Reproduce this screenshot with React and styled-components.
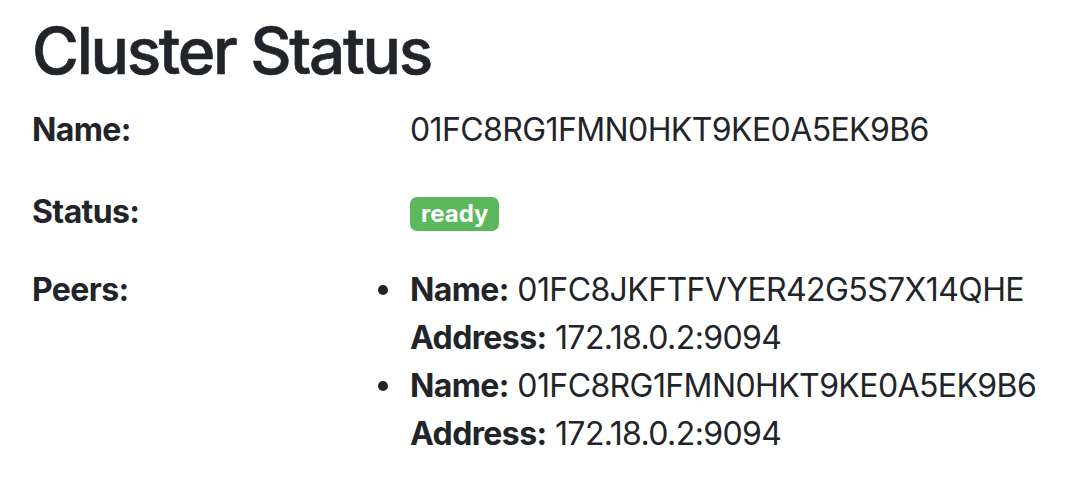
import styled, { createGlobalStyle } from "styled-components";

const GlobalStyle = createGlobalStyle`
  body {
    margin: 0;
    background: #ffffff;
    color: #212529;
    font-family: Inter, "Noto Sans", "Liberation Sans", sans-serif;
    overflow: hidden;
  }
`;

const Page = styled.div`
  padding: 13px 32px 0;
`;

const Title = styled.h2`
  margin: 0 0 16px;
  font-size: 64px;
  font-weight: 500;
  line-height: 1.2;
  letter-spacing: -2.3px;
  -webkit-text-stroke: 0.6px #212529;
`;

const Details = styled.dl`
  margin: 0;
  font-size: 32px;
  line-height: 48px;
  letter-spacing: -0.6px;
`;

const Row = styled.div`
  display: grid;
  grid-template-columns: 378px 1fr;
  margin-bottom: ${(props) => props.$gap || 32}px;
`;

const Label = styled.dt`
  font-weight: 700;
`;

const Value = styled.dd`
  margin: 0;
  white-space: nowrap;
`;

const Badge = styled.span`
  display: inline-block;
  vertical-align: 1px;
  padding: 5px 11px;
  border-radius: 7px;
  background: #5cb85c;
  color: #ffffff;
  font-size: 24px;
  font-weight: 700;
  line-height: 1;
  letter-spacing: 0;
`;

const PeerList = styled.ul`
  margin: 0;
  padding: 0;
  list-style: none;
`;

const Peer = styled.li`
  position: relative;

  &::before {
    content: "";
    position: absolute;
    left: -32px;
    top: 19px;
    width: 10px;
    height: 10px;
    border-radius: 50%;
    background: #212529;
  }
`;

const Line = styled.div``;

const Key = styled.strong`
  font-weight: 700;
`;

const peers = [
  { name: "01FC8JKFTFVYER42G5S7X14QHE", address: "172.18.0.2:9094" },
  { name: "01FC8RG1FMN0HKT9KE0A5EK9B6", address: "172.18.0.2:9094" },
];

const App = () => {
  return (
    <Page>
      <GlobalStyle />
      <Title>Cluster Status</Title>
      <Details>
        <Row $gap={34}>
          <Label>Name:</Label>
          <Value>01FC8RG1FMN0HKT9KE0A5EK9B6</Value>
        </Row>
        <Row $gap={30}>
          <Label>Status:</Label>
          <Value>
            <Badge>ready</Badge>
          </Value>
        </Row>
        <Row>
          <Label>Peers:</Label>
          <Value>
            <PeerList>
              {peers.map((peer) => (
                <Peer key={peer.name}>
                  <Line>
                    <Key>Name:</Key> {peer.name}
                  </Line>
                  <Line>
                    <Key>Address:</Key> {peer.address}
                  </Line>
                </Peer>
              ))}
            </PeerList>
          </Value>
        </Row>
      </Details>
    </Page>
  );
};

export default App;
